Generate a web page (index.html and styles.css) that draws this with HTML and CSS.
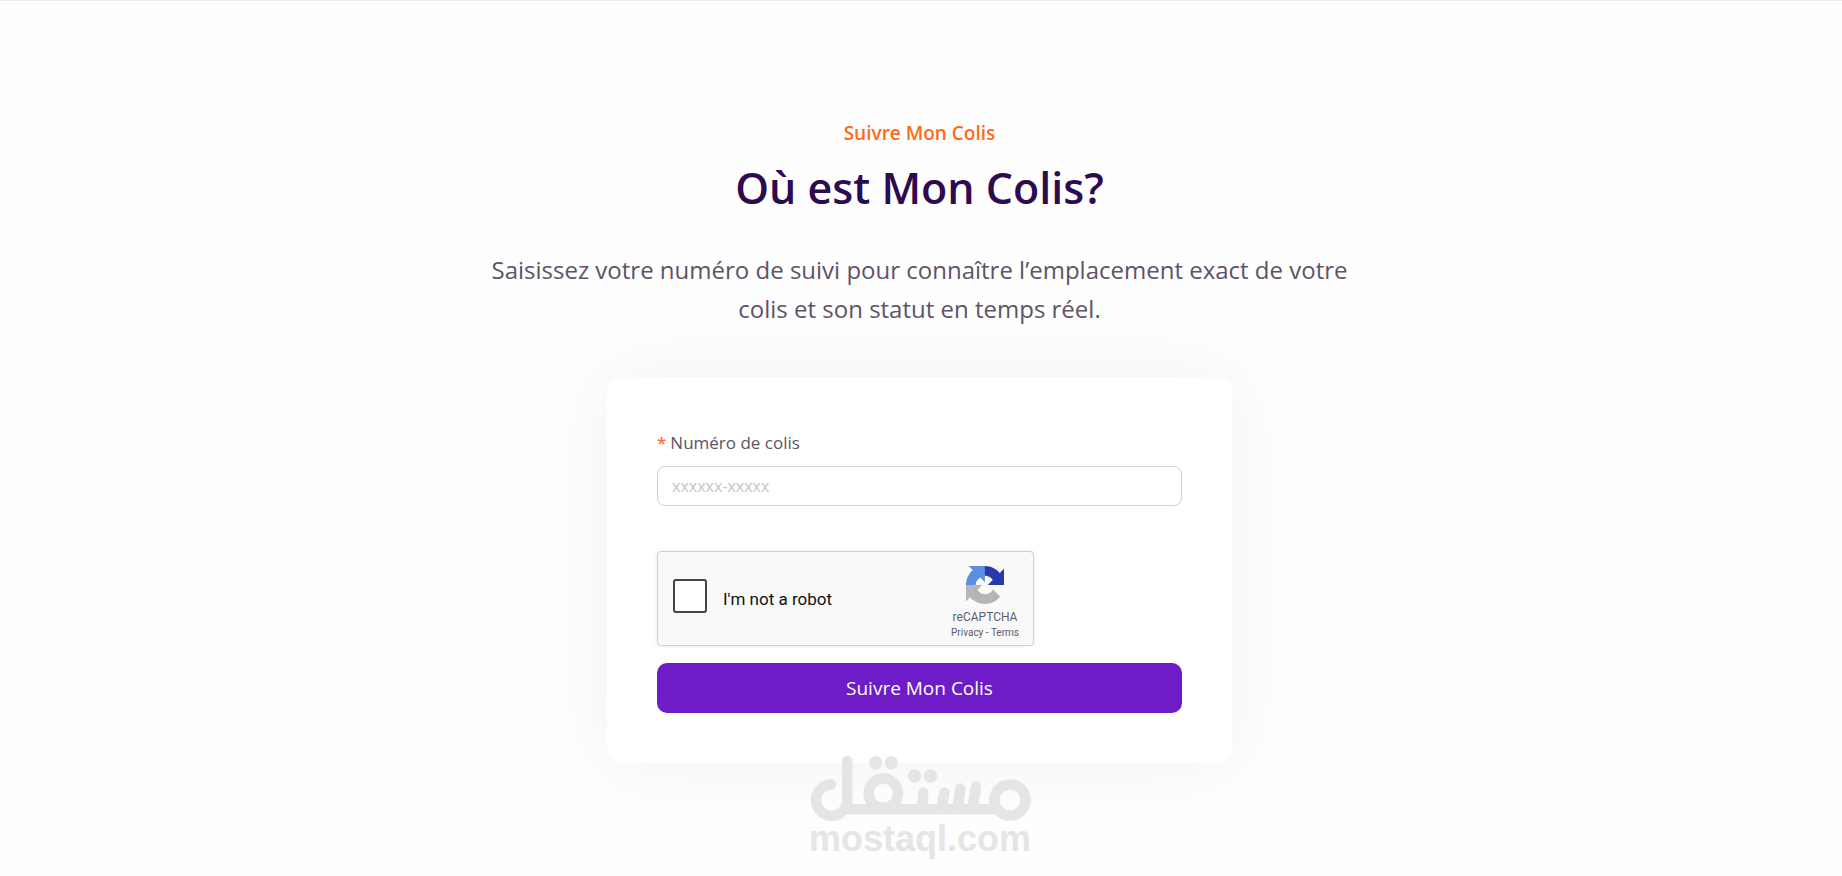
FILE: index.html
```html
<!DOCTYPE html>
<html lang="fr">
<head>
  <meta charset="UTF-8">
  <meta name="viewport" content="width=device-width, initial-scale=1">
  <title>Suivre Mon Colis</title>
  <link rel="stylesheet" href="styles.css">
</head>
<body>
  <main class="tracking">
    <header class="tracking-header">
      <p class="subtitle">Suivre Mon Colis</p>
      <h1 class="title">Où est Mon Colis?</h1>
      <p class="description">Saisissez votre numéro de suivi pour connaître l’emplacement exact de votre colis et son statut en temps réel.</p>
    </header>

    <form class="card">
      <label class="field-label" for="tracking-number"><span class="required">*</span>Numéro de colis</label>
      <input class="field-input" type="text" id="tracking-number" placeholder="xxxxxx-xxxxx" required>

      <div class="captcha">
        <input class="captcha-box" type="checkbox" id="captcha">
        <label class="captcha-label" for="captcha">I'm not a robot</label>
        <div class="captcha-brand">
          <svg class="captcha-logo" viewBox="0 0 64 64" aria-hidden="true">
            <path fill="#263ba9" d="M64 31.955l-.033-1.37V4.687l-7.16 7.16C50.948 4.674 42.033.093 32.05.093c-10.4 0-19.622 4.96-25.458 12.64l11.736 11.86a15.55 15.55 0 0 1 4.754-5.334c2.05-1.6 4.952-2.906 8.968-2.906.485 0 .86.057 1.135.163 4.976.393 9.288 3.14 11.828 7.124l-8.307 8.307L64 31.953"/>
            <path fill="#5a8ee0" d="M31.862.094l-1.37.033H4.594l7.16 7.16C4.58 13.147 0 22.06 0 32.046c0 10.4 4.96 19.622 12.64 25.458L24.5 45.768a15.55 15.55 0 0 1-5.334-4.754c-1.6-2.05-2.906-4.952-2.906-8.968 0-.485.057-.86.163-1.135.393-4.976 3.14-9.288 7.124-11.828l8.307 8.307L31.86.095"/>
            <path fill="#b5b5b5" d="M.001 32.045l.033 1.37v25.898l7.16-7.16c5.86 7.173 14.774 11.754 24.76 11.754 10.4 0 19.622-4.96 25.458-12.64l-11.736-11.86a15.55 15.55 0 0 1-4.754 5.334c-2.05 1.6-4.952 2.906-8.968 2.906-.485 0-.86-.057-1.135-.163-4.976-.393-9.288-3.14-11.828-7.124l8.307-8.307c-10.522.04-22.4.066-27.295-.005"/>
          </svg>
          <span class="captcha-name">reCAPTCHA</span>
          <span class="captcha-links"><a href="#">Privacy</a> - <a href="#">Terms</a></span>
        </div>
      </div>

      <button class="submit-button" type="submit">Suivre Mon Colis</button>
    </form>
  </main>

  <div class="watermark">
    <svg class="watermark-logo" viewBox="0 0 221 67" aria-hidden="true">
      <g fill="none" stroke="#e5e5e5" stroke-width="10.5" stroke-linecap="round">
        <path d="M21 29.5A15.7 15.7 0 1 0 37.3 45V6"/>
        <path d="M37 54.3H185"/>
        <circle cx="73.3" cy="38.3" r="14.7"/>
        <circle cx="200" cy="45" r="15.6"/>
        <path d="M113.3 37.5L111.8 54M134.3 37.5L131.5 54M150.3 33.5L147.5 54M166 31.5L162.5 54"/>
      </g>
      <g fill="#e5e5e5">
        <circle cx="65.7" cy="7.7" r="6.7"/>
        <circle cx="81.3" cy="7.7" r="6.7"/>
        <circle cx="104.7" cy="21" r="6.7"/>
        <circle cx="120.3" cy="21" r="6.7"/>
      </g>
    </svg>
    <span class="watermark-text">mostaql.com</span>
  </div>
</body>
</html>
```
FILE: styles.css
```css
* {
  box-sizing: border-box;
}

body {
  position: relative;
  min-height: 100vh;
  margin: 0;
  border-top: 1px solid #eeeeee;
  background-color: #fefefe;
  color: #5d5466;
  font-family: "Segoe UI", "Open Sans", "Noto Sans", sans-serif;
}

.tracking {
  display: flex;
  flex-direction: column;
  align-items: center;
  padding: 116px 3px 112px 0;
}

.tracking-header {
  max-width: 880px;
  text-align: center;
}

.subtitle {
  margin: 0;
  color: #ff6b13;
  font-size: 19px;
  font-weight: 600;
  line-height: 32px;
}

.title {
  margin: 7px 0 30px;
  color: #2c0b50;
  font-size: 43px;
  font-weight: 600;
  line-height: 64px;
}

.description {
  margin: 0;
  font-size: 24px;
  line-height: 39px;
}

.card {
  display: flex;
  flex-direction: column;
  width: 100%;
  max-width: 625px;
  margin-top: 49px;
  padding: 50px;
  border-radius: 16px;
  background-color: #ffffff;
  box-shadow: 0 0 80px rgba(0, 0, 0, 0.05);
}

.field-label {
  margin-bottom: 7px;
  font-size: 17px;
  line-height: 32px;
}

.required {
  margin-right: 4px;
  color: #ff6b3d;
  font-weight: 600;
}

.field-input {
  height: 40px;
  padding: 0 14px;
  border: 1px solid #d0d0d0;
  border-radius: 8px;
  background-color: #ffffff;
  color: #5d5466;
  font-family: inherit;
  font-size: 16px;
}

.field-input::placeholder {
  color: #c4c4c4;
}

.captcha {
  display: flex;
  align-items: center;
  width: 377px;
  max-width: 100%;
  height: 95px;
  margin: 45px 0 17px;
  padding: 0 14px 0 15px;
  border: 1px solid #d0d0d0;
  border-radius: 4px;
  background-color: #f9f9f9;
  box-shadow: 0 0 5px rgba(0, 0, 0, 0.08);
  font-family: Roboto, sans-serif;
}

.captcha-box {
  width: 34px;
  height: 34px;
  margin: 0 16px 5px 0;
  border: 2px solid #444444;
  border-radius: 3px;
  background-color: #ffffff;
  appearance: none;
}

.captcha-box:checked {
  background-color: #1c3aa9;
}

.captcha-label {
  color: #111111;
  font-size: 17px;
}

.captcha-brand {
  display: flex;
  flex-direction: column;
  align-items: center;
  margin-left: auto;
  padding-top: 8px;
  color: #5d5d66;
}

.captcha-logo {
  width: 38px;
  height: 38px;
}

.captcha-name {
  margin-top: 4px;
  font-size: 12px;
  line-height: 18px;
}

.captcha-links {
  font-size: 10px;
  line-height: 14px;
}

.captcha-links a {
  color: inherit;
  text-decoration: none;
}

.submit-button {
  height: 50px;
  border: none;
  border-radius: 10px;
  background-color: #6d1cc7;
  color: #ffffff;
  font-family: inherit;
  font-size: 19px;
  cursor: pointer;
}

.watermark {
  position: absolute;
  right: 0;
  bottom: 20px;
  left: 0;
  display: flex;
  flex-direction: column;
  align-items: center;
  padding-right: 2px;
  pointer-events: none;
}

.watermark-logo {
  width: 221px;
}

.watermark-text {
  color: #e5e5e5;
  font-family: "Liberation Sans", Arial, sans-serif;
  font-size: 36px;
  font-weight: bold;
  line-height: 34px;
}
```
